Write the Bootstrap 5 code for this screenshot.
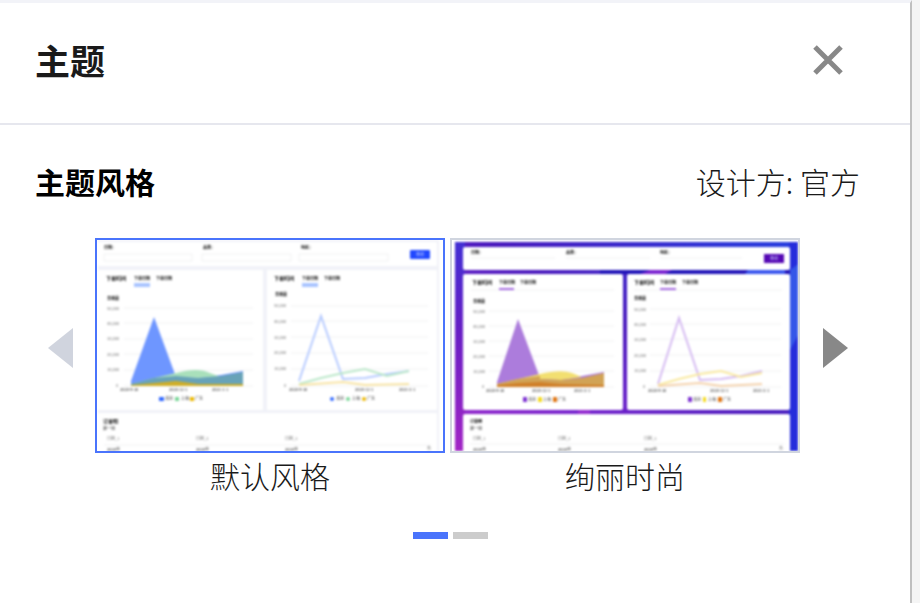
<!DOCTYPE html>
<html lang="zh-CN">
<head>
<meta charset="utf-8">
<meta name="viewport" content="width=device-width, initial-scale=1">
<title>主题</title>
<link href="https://cdn.jsdelivr.net/npm/bootstrap@5.3.0/dist/css/bootstrap.min.css" rel="stylesheet">
<style>
  body { font-family: "Noto Sans CJK SC", sans-serif; font-weight: 300; background: #f5f5f5; color: #1a1a1a; font-size: 30px; line-height: 40px; }
  .theme-panel { margin-right: 8px; border-top: 3px solid #f2f3f8; border-right: 2px solid #c0c0c0; }
  .panel-head { height: 122px; padding: 0 50px 6px 35px; border-bottom: 2px solid #e6e7ee; }
  .panel-head h1 { font-size: 35px; line-height: 40px; }
  .close-btn { width: 64px; height: 64px; }
  .panel-body { padding: 36px 50px 36px 35px; }
  .panel-body h2 { font-size: 30px; line-height: 40px; color: #000; }
  .theme-row { margin-top: 37px; }
  .step { width: 60px; height: 220px; flex: none; }
  .step:disabled { opacity: 1; }
  .step-prev { padding: 0 10px 0 0; }
  .step-next { padding: 0 0 0 10px; }
  .thumb-list { gap: 5px; }
  .thumb { border: 2px solid #d0d5df; overflow: hidden; }
  .thumb.active { border-color: #4a74fc; }
  .thumb svg { width: 100%; height: auto; filter: blur(1px); }
  .caption { margin-top: 2px; }
  .dots { margin-top: 37px; }
  .dots button { width: 35px; height: 7px; margin-left: 5px; background: #ccc; }
  .dots .active { background: #4a74fc; }
  .thumb text { font-size: 4px; font-weight: 400; fill: #222; }
  .thumb .strong { font-size: 5px; font-weight: 700; fill: #000; }
  .thumb .sub { font-size: 4px; font-weight: 700; fill: #111; }
  .thumb .minor { font-size: 4px; font-weight: 700; fill: #000; }
  .thumb .axis { fill: #777; }
  .thumb .on-btn { fill: #cdd8ff; }
  .thumb .grid-lines { stroke: #f0f1f3; stroke-width: 1; fill: none; }
</style>
<script src="https://cdn.jsdelivr.net/npm/bootstrap@5.3.0/dist/js/bootstrap.bundle.min.js" defer></script>
</head>
<body>
<main class="theme-panel bg-white min-vh-100">
  <header class="panel-head d-flex align-items-center justify-content-between">
    <h1 class="fw-bold m-0">主题</h1>
    <button type="button" class="close-btn btn border-0 p-0 d-flex align-items-center justify-content-center" aria-label="关闭">
      <svg width="30" height="30" viewBox="0 0 30 30" aria-hidden="true"><path d="M2 2 28 28M28 2 2 28" stroke="#888" stroke-width="5" fill="none"/></svg>
    </button>
  </header>
  <section class="panel-body">
    <div class="d-flex justify-content-between align-items-center">
      <h2 class="fw-bold m-0">主题风格</h2>
      <span>设计方: 官方</span>
    </div>
    <div class="theme-row d-flex align-items-start">
      <button type="button" class="step step-prev btn border-0" aria-label="上一页" disabled>
        <svg width="25" height="40" viewBox="0 0 25 40" aria-hidden="true"><path d="M25 0V40L0 20Z" fill="#d0d4de"/></svg>
      </button>
      <div class="thumb-list d-flex flex-grow-1">
        <figure class="m-0 flex-fill text-center">
          <button type="button" class="thumb active d-block w-100 p-0 bg-white" aria-label="默认风格">
            <svg class="d-block" viewBox="97 240 346 211" aria-hidden="true">
              <g>
                <rect x="98" y="240" width="341" height="213" fill="#f1f2f8"/>
                <g fill="#fff"><rect x="98" y="242" width="339" height="24" rx="1"/><rect x="98" y="270" width="165" height="140" rx="1"/><rect x="267" y="270" width="170" height="140" rx="1"/><rect x="98" y="413" width="339" height="42" rx="1"/></g>
                <path class="grid-lines" d="M104 254H192V261H104ZM202 254H291V261H202ZM299 254H388V261H299Z"/>
                <text class="sub" x="104" y="249">日期：</text><text class="sub" x="203" y="249">品类：</text><text class="sub" x="301" y="249">地区：</text>
                <rect x="410" y="250" width="20" height="9" rx="1" fill="#2148ff"/><text class="on-btn" x="416" y="256">查询</text>
                <text class="strong" x="106" y="280">下单时间</text><text class="sub" x="134" y="280">下单日期</text><text class="sub" x="156" y="280">下单日期</text>
                <rect x="134" y="283" width="16" height="4" fill="#a9c4ff"/><rect x="302" y="283" width="16" height="4" fill="#a9c4ff"/>
                <text class="strong" x="274" y="280">下单时间</text><text class="sub" x="302" y="280">下单日期</text><text class="sub" x="324" y="280">下单日期</text>
                <text class="minor" x="107" y="300">总销量</text><text class="minor" x="275" y="296">总销量</text>
                <path class="grid-lines" d="M124 308H253M124 323H253M124 339H253M124 354H253M124 370H253M124 386H253M291 306H428M291 321H428M291 337H428M291 353H428M291 369H428M291 386H428"/>
                <text class="axis" x="107" y="310">50,000</text><text class="axis" x="107" y="325">40,000</text><text class="axis" x="107" y="340">30,000</text><text class="axis" x="107" y="356">20,000</text><text class="axis" x="107" y="371">10,000</text><text class="axis" x="116" y="387">0</text>
                <text class="axis" x="274" y="307">50,000</text><text class="axis" x="274" y="323">40,000</text><text class="axis" x="274" y="339">30,000</text><text class="axis" x="274" y="354">20,000</text><text class="axis" x="274" y="370">10,000</text><text class="axis" x="284" y="387">0</text>
                <path d="M131 386V381L154 317 176 377 198 378 221 375 243 371V386Z" fill="#6e96ff"/>
                <path d="M131 386V384L154 378 176 373Q198 367 210 373L221 377 198 378 176 377Z" fill="#a9e0bb"/>
                <path d="M131 386V384L154 378 176 376 198 378 221 376 243 372V386Z" fill="#68a3b8"/>
                <path d="M131 385 154 383 176 381 198 384 243 384V386H131Z" fill="#cfae28"/>
                <g fill="none" stroke-width="2"><path d="M299 381 321 316 343 379 365 378 387 374 409 371" stroke="#b8ccff"/><path d="M299 384 321 378 343 373 365 369 387 376 409 371" stroke="#bce8ca"/><path d="M299 385 343 382 365 385 409 384" stroke="#f8e4a4"/></g>
                <text x="120" y="391">2020-9-30</text><text x="169" y="391">2020-12-1</text><text x="212" y="391">2021-1-1</text><text x="289" y="391">2020-9-30</text><text x="355" y="391">2020-12-1</text><text x="399" y="391">2021-2-1</text>
                <g fill="#3268ff"><rect x="159" y="397" width="5" height="4"/><circle cx="332" cy="399" r="2"/></g><g fill="#7ad698"><rect x="175" y="397" width="4" height="4"/><circle cx="348" cy="399" r="2"/></g><g fill="#ecb800"><rect x="190" y="397" width="4" height="4"/><circle cx="364" cy="399" r="2"/></g>
                <text x="165" y="400">北京</text><text x="181" y="400">上海</text><text x="195" y="400">广东</text><text x="336" y="400">北京</text><text x="352" y="400">上海</text><text x="367" y="400">广东</text>
                <text class="strong" x="103" y="423">订单明</text><text x="103" y="430">第一组</text>
                <text class="axis" x="107" y="440">日期_1</text><text class="axis" x="196" y="440">日期_2</text><text class="axis" x="285" y="440">日期_3</text>
                <path class="grid-lines" d="M104 445H431"/><text x="107" y="451">2020年</text><text x="196" y="451">2020年</text><text x="285" y="451">2020年</text><text class="axis" x="427" y="450">合</text>
              </g>
            </svg>
          </button>
          <figcaption class="caption">默认风格</figcaption>
        </figure>
        <figure class="m-0 flex-fill text-center">
          <button type="button" class="thumb d-block w-100 p-0 bg-white" aria-label="绚丽时尚">
            <svg class="d-block" viewBox="452 240 346 211" aria-hidden="true">
              <defs>
                <linearGradient id="night" x1="0" y1="1" x2="1" y2="0"><stop offset="0" stop-color="#a229ca"/><stop offset=".28" stop-color="#7522cd"/><stop offset=".55" stop-color="#4a19bd"/><stop offset="1" stop-color="#253fe0"/></linearGradient>
                <linearGradient id="side" x1="0" y1="0" x2="0" y2="1"><stop offset="0" stop-color="#4330d4"/><stop offset=".4" stop-color="#661fc5"/><stop offset="1" stop-color="#a526c5"/></linearGradient>
              </defs>
              <g>
                <rect x="455" y="242" width="346" height="214" fill="url(#night)"/>
                <rect x="455" y="242" width="10" height="214" fill="url(#side)"/>
                <path d="M789 242H801V456H789Z" fill="#252ddb"/><path d="M790 270 801 262V330L790 350Z" fill="#3557e8"/><path d="M600 270H790V274H600Z" fill="#2013b8"/><path d="M748 270H785V274H745Z" fill="#3a55ee"/><path d="M650 270H672L665 274H640Z" fill="#7a22d0"/><path d="M578 410H590V414H578Z" fill="#9228cf"/>
                <g fill="#fff"><rect x="463" y="247" width="327" height="23" rx="2"/><rect x="463" y="274" width="160" height="136" rx="2"/><rect x="627" y="274" width="163" height="136" rx="2"/><rect x="463" y="414" width="327" height="43" rx="2"/></g>
                <path class="grid-lines" d="M471 258H555M566 258H650M660 258H742M471 290H614M634 290H782"/>
                <text class="sub" x="471" y="254">日期：</text><text class="sub" x="566" y="254">品类：</text><text class="sub" x="660" y="254">地区：</text>
                <rect x="764" y="254" width="20" height="9" fill="#5508b4"/><text class="on-btn" x="770" y="260">查询</text>
                <text class="strong" x="472" y="284">下单时间</text><text class="sub" x="499" y="284">下单日期</text><text class="sub" x="520" y="284">下单日期</text>
                <text class="strong" x="634" y="284">下单时间</text><text class="sub" x="660" y="284">下单日期</text><text class="sub" x="682" y="284">下单日期</text>
                <path d="M499 289H514M660 289H676" stroke="#a468e0" stroke-width="2"/>
                <text class="minor" x="473" y="303">总销量</text><text class="minor" x="634" y="300">总销量</text>
                <path class="grid-lines" d="M489 311H614M489 326H614M489 341H614M489 356H614M489 371H614M489 387H614M650 309H781M650 324H781M650 339H781M650 355H781M650 371H781M650 387H781"/>
                <text class="axis" x="473" y="313">50,000</text><text class="axis" x="473" y="328">40,000</text><text class="axis" x="473" y="343">30,000</text><text class="axis" x="473" y="358">20,000</text><text class="axis" x="473" y="373">10,000</text><text class="axis" x="482" y="388">0</text>
                <text class="axis" x="634" y="311">50,000</text><text class="axis" x="634" y="326">40,000</text><text class="axis" x="634" y="341">30,000</text><text class="axis" x="634" y="357">20,000</text><text class="axis" x="634" y="372">10,000</text><text class="axis" x="643" y="388">0</text>
                <path d="M497 387V382L518 319 540 378 561 378 582 376 604 372V387Z" fill="#ac7cdc"/>
                <path d="M497 387V384L518 379 540 374Q561 369 572 373L582 377 561 380 540 379Z" fill="#f2df70"/>
                <path d="M497 387V384L518 379 540 376 540 379 561 380 582 378 604 373V387Z" fill="#d1a356"/>
                <path d="M497 385 518 383 540 382 561 384 604 385V387H497Z" fill="#d0802a"/>
                <g fill="none" stroke-width="2"><path d="M658 384 679 318 700 380 721 379 741 376 762 371" stroke="#d6bcf2"/><path d="M658 385 679 379 700 374 721 371 741 377 762 373" stroke="#f9e9a0"/><path d="M658 386 700 383 721 386 762 384" stroke="#f4d2ac"/></g>
                <text x="486" y="392">2020-9-30</text><text x="532" y="392">2020-12-1</text><text x="574" y="392">2021-2-1</text><text x="648" y="392">2020-9-30</text><text x="710" y="392">2020-12-1</text><text x="753" y="392">2021-2-1</text>
                <g fill="#7d32d2"><rect x="523" y="397" width="4" height="5"/><rect x="688" y="397" width="4" height="5"/></g><g fill="#f4da20"><rect x="538" y="397" width="4" height="5"/><rect x="703" y="397" width="3" height="5"/></g><g fill="#df7512"><rect x="553" y="397" width="4" height="5"/><rect x="718" y="397" width="4" height="5"/></g>
                <text x="528" y="401">北京</text><text x="543" y="401">上海</text><text x="558" y="401">广东</text><text x="693" y="401">北京</text><text x="708" y="401">上海</text><text x="723" y="401">广东</text>
                <text class="minor" x="470" y="423">订单明</text><text x="470" y="430">第一组</text>
                <text class="axis" x="473" y="440">日期_1</text><text class="axis" x="558" y="440">日期_2</text><text class="axis" x="644" y="440">日期_3</text>
                <path class="grid-lines" d="M470 444H784"/><text x="473" y="451">2020年</text><text x="558" y="451">2020年</text><text x="644" y="451">2020年</text><text class="axis" x="779" y="450">合</text>
              </g>
            </svg>
          </button>
          <figcaption class="caption">绚丽时尚</figcaption>
        </figure>
      </div>
      <button type="button" class="step step-next btn border-0" aria-label="下一页">
        <svg width="25" height="40" viewBox="0 0 25 40" aria-hidden="true"><path d="M0 0V40L25 20Z" fill="#888"/></svg>
      </button>
    </div>
    <nav class="dots d-flex justify-content-center" aria-label="主题分页">
      <button type="button" class="active border-0 p-0" aria-label="第 1 页"></button>
      <button type="button" class="border-0 p-0" aria-label="第 2 页"></button>
    </nav>
  </section>
</main>
</body>
</html>
